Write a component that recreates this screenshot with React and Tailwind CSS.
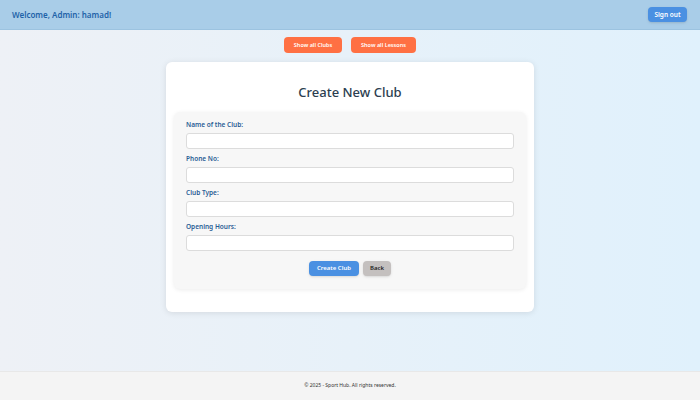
export default function App() {
  const fields = ['Name of the Club:', 'Phone No:', 'Club Type:', 'Opening Hours:'];

  return (
    <div className="min-h-[400px] flex flex-col bg-gradient-to-r from-[#eef1f6] to-[#e0f1fc] font-['Noto_Sans',sans-serif]">
      <header className="h-[30px] bg-[#a9cde8] border-b border-[#9cc3e0] flex items-center justify-between pl-3 pr-[13px]">
        <span className="text-[8px] font-semibold text-[#1f63a8]">Welcome, Admin: hamad!</span>
        <button className="h-[15px] w-[39px] rounded bg-[#4a90e2] text-white text-[6.5px] font-semibold shadow-sm">Sign out</button>
      </header>

      <main className="flex-1 flex flex-col items-center">
        <div className="flex gap-[9px] mt-[7px]">
          <button className="h-[16px] w-[58px] rounded bg-[#ff7043] text-white text-[5.5px] font-semibold">Show all Clubs</button>
          <button className="h-[16px] w-[65px] rounded bg-[#ff7043] text-white text-[5.5px] font-semibold">Show all Lessons</button>
        </div>

        <div className="mt-[9px] w-[368px] h-[250px] bg-white rounded-md shadow-[0_1px_6px_rgba(0,0,0,0.1)] px-2 pt-[21px]">
          <h1 className="text-center text-[13px] font-medium text-[#2c3e50] leading-[18px]">Create New Club</h1>

          <div className="mt-[11px] bg-[#f7f7f7] rounded-md shadow-[0_1px_4px_rgba(0,0,0,0.08)] px-3 pt-[9px] pb-[13px]">
            {fields.map((label) => (
              <div key={label} className="mb-[6px]">
                <label className="block text-[6.5px] font-semibold text-[#2a5d95] leading-[8px] mb-[4px]">{label}</label>
                <input type="text" className="block w-full h-[16px] bg-white border border-[#dcdcdc] rounded-[3px]" />
              </div>
            ))}
            <div className="flex justify-center gap-1 mt-[10px]">
              <button className="h-[15px] w-[50px] rounded bg-[#4a90e2] text-white text-[6px] font-semibold shadow-sm">Create Club</button>
              <button className="h-[15px] w-[28px] rounded bg-[#c4c0bf] text-[#222] text-[6px] font-semibold shadow-sm">Back</button>
            </div>
          </div>
        </div>
      </main>

      <footer className="h-[29px] bg-[#f4f4f4] border-t border-[#e8e8e8] flex items-center justify-center">
        <span className="text-[5px] text-[#333]">© 2025 - Sport Hub. All rights reserved.</span>
      </footer>
    </div>
  );
}
